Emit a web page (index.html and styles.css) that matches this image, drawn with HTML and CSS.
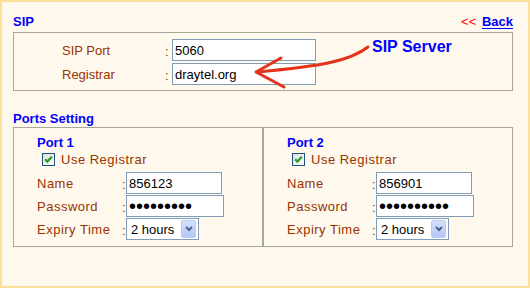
FILE: index.html
```html
<!DOCTYPE html>
<html lang="en">
  <head>
    <meta charset="UTF-8" />
    <title>SIP</title>
    <link rel="stylesheet" href="styles.css">
  </head>
  <body>
    <div class="frame">
      <div class="head">
        <h2 class="title">SIP</h2>
        <a class="back" href="#"><span class="arr">&lt;&lt;</span> <u>Back</u></a>
      </div>

      <!-- SIP server -->
      <div class="box sip">
        <div class="row">
          <label>SIP Port</label><span class="colon">:</span><input class="txt wide" type="text" value="5060" />
        </div>
        <div class="row">
          <label>Registrar</label><span class="colon">:</span><input class="txt wide" type="text" value="draytel.org" />
        </div>
      </div>

      <h2 class="title ports-title">Ports Setting</h2>
      <div class="box ports">
        <div class="port">
          <h3 class="port-name">Port 1</h3>
          <label class="check">
            <svg class="cb" width="13" height="13" viewBox="0 0 13 13">
              <defs>
                <linearGradient id="cbg1" x1="0" y1="0" x2="1" y2="1">
                  <stop offset="0" stop-color="#dcdcd7" />
                  <stop offset="1" stop-color="#ffffff" />
                </linearGradient>
              </defs>
              <rect x="0.5" y="0.5" width="12" height="12" fill="url(#cbg1)" stroke="#1c5180" />
              <path d="M3.2 6.2 L5.4 8.6 L9.8 3.8" fill="none" stroke="#21a121" stroke-width="2.2" />
            </svg>
            Use Registrar
          </label>
          <div class="grid">
            <label>Name</label><span class="colon">:</span><input class="txt name" type="text" value="856123" />
            <label>Password</label><span class="colon">:</span><input class="txt pass" type="password" value="123456789" />
            <label>Expiry Time</label><span class="colon">:</span>
            <span class="combo">
              <select><option>2 hours</option><option>1 hour</option></select>
              <span class="drop"><svg width="8" height="6" viewBox="0 0 8 6"><path d="M1 1 L4 4 L7 1" fill="none" stroke="#4d6185" stroke-width="2" /></svg></span>
            </span>
          </div>
        </div>
        <div class="port">
          <h3 class="port-name">Port 2</h3>
          <label class="check">
            <svg class="cb" width="13" height="13" viewBox="0 0 13 13">
              <rect x="0.5" y="0.5" width="12" height="12" fill="url(#cbg1)" stroke="#1c5180" />
              <path d="M3.2 6.2 L5.4 8.6 L9.8 3.8" fill="none" stroke="#21a121" stroke-width="2.2" />
            </svg>
            Use Registrar
          </label>
          <div class="grid">
            <label>Name</label><span class="colon">:</span><input class="txt name" type="text" value="856901" />
            <label>Password</label><span class="colon">:</span><input class="txt pass" type="password" value="1234567890" />
            <label>Expiry Time</label><span class="colon">:</span>
            <span class="combo">
              <select><option>2 hours</option><option>1 hour</option></select>
              <span class="drop"><svg width="8" height="6" viewBox="0 0 8 6"><path d="M1 1 L4 4 L7 1" fill="none" stroke="#4d6185" stroke-width="2" /></svg></span>
            </span>
          </div>
        </div>
      </div>

      <!-- annotation on top of the form -->
      <span class="note">SIP Server</span>
      <svg class="arrow" width="530" height="288" viewBox="0 0 530 288">
        <path d="M368 47 C350 61 322 66 258 72" fill="none" stroke="#e4331b" stroke-width="3" stroke-linecap="round" />
        <path d="M281 58 L256 72 L284 87" fill="none" stroke="#e4331b" stroke-width="3" stroke-linecap="round" stroke-linejoin="round" />
      </svg>
    </div>
  </body>
</html>
```

FILE: styles.css
```css
* {
  box-sizing: border-box;
}

body {
  margin: 0;
  font-family: "Liberation Sans", Arial, sans-serif;
  font-size: 13px;
  line-height: 15px;
  background-color: #fef9ec;
}

/* outer yellow frame */
.frame {
  position: relative;
  width: 530px;
  height: 288px;
  border: 2px solid #fbe29c;
  padding: 12px 0 0 11px;
  background-color: #fef9ec;
}

.head {
  width: 500px;
  display: flex;
  justify-content: space-between;
  align-items: baseline;
}

.title {
  margin: 0;
  font-size: 13px;
  line-height: 15px;
  font-weight: bold;
  color: #0000ff;
}

.back {
  color: #0000ff;
  text-decoration: none;
  font-weight: bold;
}
.back .arr {
  color: #ff0000;
  font-weight: normal;
  margin-right: 2px;
}
.back u {
  text-underline-offset: 2px;
}

.box {
  width: 500px;
  border: 1px solid #a7a79c;
}

/* SIP box */
.sip {
  margin-top: 3px;
  padding: 6px 0 5px 48px;
  display: flex;
  flex-direction: column;
  gap: 2px;
}
.sip .row {
  display: flex;
  align-items: center;
}
.sip label {
  width: 103px;
  color: #993300;
}
.sip .colon {
  width: 7px;
}

.colon {
  color: #993300;
  align-self: end;
  line-height: 18px;
}

.txt {
  height: 22px;
  border: 1px solid #7f9db9;
  background-color: #ffffff;
  padding: 0 2px;
  font-family: "Liberation Sans", Arial, sans-serif;
  font-size: 13px;
  color: #000000;
  outline: none;
}
.wide {
  width: 144px;
}

.ports-title {
  margin-top: 20px;
}

.ports {
  margin-top: 1px;
  border: none;
  display: grid;
  grid-template-columns: 250px 250px;
}
.port {
  border: 1px solid #a7a79c;
  height: 120px;
  padding: 7px 0 0 23px;
}
.port-name {
  margin: 0;
  font-size: 13px;
  line-height: 15px;
  color: #0000ff;
}

.check {
  display: flex;
  align-items: center;
  gap: 6px;
  margin: 1px 0 0 5px;
  height: 17px;
  color: #993300;
  letter-spacing: 0.5px;
}
.cb {
  display: block;
}

.grid {
  margin-top: 4px;
  display: grid;
  grid-template-columns: 85px 4px auto;
  row-gap: 1px;
  align-items: center;
  justify-items: start;
}
.grid label {
  color: #993300;
  letter-spacing: 0.5px;
}
.name {
  width: 96px;
}
.pass {
  width: 98px;
  font-size: 20px;
  letter-spacing: 0;
}

/* xp-looking combo box */
.combo {
  display: inline-flex;
  align-items: center;
  width: 73px;
  height: 22px;
  border: 1px solid #7f9db9;
  background-color: #ffffff;
  padding-right: 2px;
}
.combo select {
  appearance: none;
  border: none;
  background: transparent;
  font-family: "Liberation Sans", Arial, sans-serif;
  font-size: 13px;
  color: #000000;
  padding: 0 0 0 4px;
  width: 52px;
  outline: none;
}
.drop {
  display: flex;
  align-items: center;
  justify-content: center;
  width: 15px;
  height: 18px;
  margin-left: auto;
  border: 1px solid #b9cbf5;
  border-radius: 2px;
  background: linear-gradient(#d3e0fd, #b4c8f7);
  pointer-events: none;
}

/* red hand-drawn note */
.note {
  position: absolute;
  left: 370px;
  top: 36px;
  font-size: 16px;
  line-height: 18px;
  font-weight: bold;
  color: #0000ff;
}
.arrow {
  position: absolute;
  left: -2px;
  top: -2px;
  pointer-events: none;
}
```
